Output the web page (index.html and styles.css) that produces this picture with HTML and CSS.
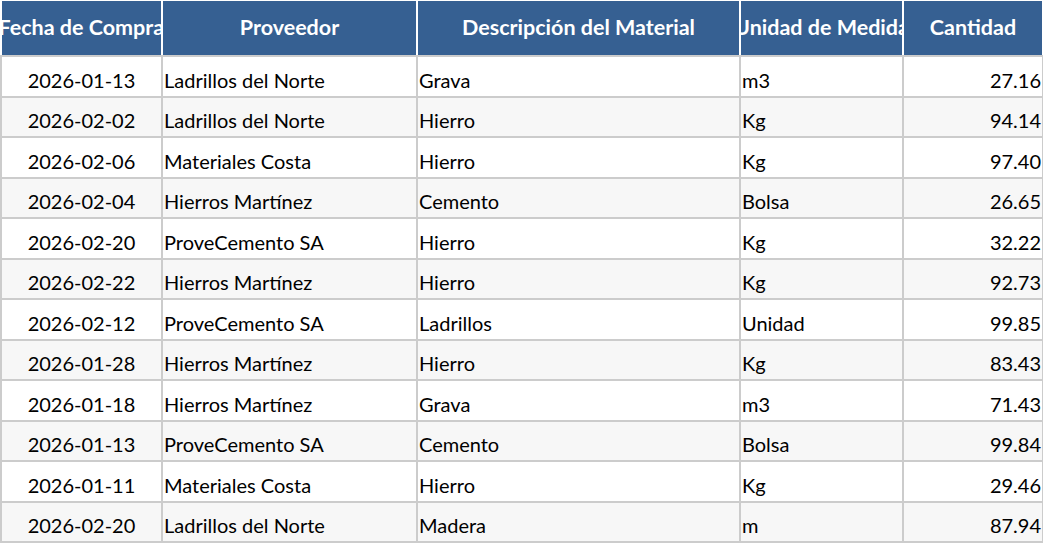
FILE: index.html
```html
<!DOCTYPE html>
<html lang="es">
<head>
<meta charset="utf-8">
<title>Compras de Materiales</title>
<link rel="stylesheet" href="styles.css">
</head>
<body>
<table class="sheet">
  <colgroup>
    <col class="c-fecha">
    <col class="c-prov">
    <col class="c-desc">
    <col class="c-unid">
    <col class="c-cant">
  </colgroup>
  <thead>
    <tr>
      <th><div class="hcell"><span>Fecha de Compra</span></div></th>
      <th><div class="hcell"><span>Proveedor</span></div></th>
      <th><div class="hcell"><span>Descripción del Material</span></div></th>
      <th><div class="hcell"><span>Unidad de Medida</span></div></th>
      <th><div class="hcell"><span>Cantidad</span></div></th>
    </tr>
  </thead>
  <tbody>
    <tr><td class="date">2026-01-13</td><td>Ladrillos del Norte</td><td>Grava</td><td>m3</td><td class="num">27.16</td></tr>
    <tr><td class="date">2026-02-02</td><td>Ladrillos del Norte</td><td>Hierro</td><td>Kg</td><td class="num">94.14</td></tr>
    <tr><td class="date">2026-02-06</td><td>Materiales Costa</td><td>Hierro</td><td>Kg</td><td class="num">97.40</td></tr>
    <tr><td class="date">2026-02-04</td><td>Hierros Martínez</td><td>Cemento</td><td>Bolsa</td><td class="num">26.65</td></tr>
    <tr><td class="date">2026-02-20</td><td>ProveCemento SA</td><td>Hierro</td><td>Kg</td><td class="num">32.22</td></tr>
    <tr><td class="date">2026-02-22</td><td>Hierros Martínez</td><td>Hierro</td><td>Kg</td><td class="num">92.73</td></tr>
    <tr><td class="date">2026-02-12</td><td>ProveCemento SA</td><td>Ladrillos</td><td>Unidad</td><td class="num">99.85</td></tr>
    <tr><td class="date">2026-01-28</td><td>Hierros Martínez</td><td>Hierro</td><td>Kg</td><td class="num">83.43</td></tr>
    <tr><td class="date">2026-01-18</td><td>Hierros Martínez</td><td>Grava</td><td>m3</td><td class="num">71.43</td></tr>
    <tr><td class="date">2026-01-13</td><td>ProveCemento SA</td><td>Cemento</td><td>Bolsa</td><td class="num">99.84</td></tr>
    <tr><td class="date">2026-01-11</td><td>Materiales Costa</td><td>Hierro</td><td>Kg</td><td class="num">29.46</td></tr>
    <tr><td class="date">2026-02-20</td><td>Ladrillos del Norte</td><td>Madera</td><td>m</td><td class="num">87.94</td></tr>
  </tbody>
</table>
</body>
</html>
```

FILE: styles.css
```css
html, body {
  margin: 0;
  padding: 0;
  background: #ffffff;
}

body {
  font-family: Lato, "Liberation Sans", sans-serif;
  color: #000000;
}

.sheet {
  border-collapse: collapse;
  table-layout: fixed;
  width: 1042px;
  margin: 0;
}

.c-fecha { width: 161px; }
.c-prov { width: 255px; }
.c-desc { width: 323px; }
.c-unid { width: 163px; }
.c-cant { width: 140px; }

.sheet th {
  background: #366092;
  color: #ffffff;
  font-weight: bold;
  font-size: 21.5px;
  height: 54px;
  padding: 0;
  border: 2px solid #ffffff;
  border-top: 1px solid #ffffff;
  border-bottom: 2px solid #cccccc;
}

.sheet th:first-child {
  border-left: 1px solid #ffffff;
}

.hcell {
  display: flex;
  justify-content: center;
  align-items: center;
  overflow: hidden;
  white-space: nowrap;
  height: 52px;
  padding-bottom: 2px;
}

.hcell span {
  flex: none;
}

.sheet td {
  height: 35.5px;
  padding: 0 1px 3px 1px;
  font-size: 20px;
  vertical-align: bottom;
  line-height: 26px;
  white-space: nowrap;
  overflow: hidden;
  border: 2px solid #cccccc;
}

.sheet tbody tr:nth-child(even) td {
  background: #f7f7f7;
}

.sheet td.date {
  text-align: center;
}

.sheet td.num {
  text-align: right;
}
```
